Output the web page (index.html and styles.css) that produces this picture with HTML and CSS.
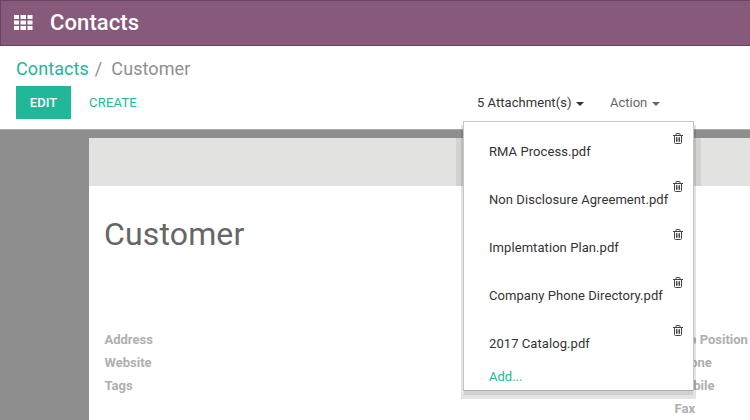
FILE: index.html
```html
<!DOCTYPE html>
<html lang="en">
<head>
<meta charset="utf-8">
<title>Contacts</title>
<link rel="stylesheet" href="styles.css">
</head>
<body>
<svg width="0" height="0" class="defs" aria-hidden="true">
  <symbol id="trash" viewBox="0 0 10 11">
    <path d="M0 2.5h10M3 2V.9Q3 .5 3.5 .5h3q.5 0 .5.4V2M1.5 2.5v7q0 1 1 1h5q1 0 1-1v-7M3.5 4.2v4.6M5 4.2v4.6M6.5 4.2v4.6" fill="none" stroke="currentColor"/>
  </symbol>
</svg>
<header class="navbar">
  <svg class="apps" viewBox="0 0 19 15" fill="#fff"><path d="M0 0h5v4H0zM6.500 0h5.500v4H6.500zM13.500 0h5v4h-5zM0 5.500h5v4H0zM6.500 5.500h5.500v4H6.500zM13.500 5.500h5v4h-5zM0 11h5v4H0zM6.500 11h5.500v4H6.500zM13.500 11h5v4h-5z"/></svg>
  <span class="brand">Contacts</span>
</header>
<section class="control">
  <nav class="crumbs"><a>Contacts</a><span class="slash">/</span><span>Customer</span></nav>
  <div class="actions">
    <button class="edit">EDIT</button>
    <button class="create">CREATE</button>
    <div class="dropdown">
      <span class="toggle">5 Attachment(s)</span><i class="caret"></i>
      <div class="menu">
        <div class="item"><span>RMA Process.pdf</span><svg class="trash"><use href="#trash"/></svg></div>
        <div class="item"><span>Non Disclosure Agreement.pdf</span><svg class="trash"><use href="#trash"/></svg></div>
        <div class="item"><span>Implemtation Plan.pdf</span><svg class="trash"><use href="#trash"/></svg></div>
        <div class="item"><span>Company Phone Directory.pdf</span><svg class="trash"><use href="#trash"/></svg></div>
        <div class="item"><span>2017 Catalog.pdf</span><svg class="trash"><use href="#trash"/></svg></div>
        <a class="add">Add...</a>
      </div>
    </div>
    <div class="more"><span class="action">Action</span><i class="caret"></i></div>
  </div>
</section>
<main class="content">
  <div class="sheet">
    <div class="statusbar"></div>
    <h1>Customer</h1>
    <div class="fields">
      <div class="col"><b>Address</b><b>Website</b><b>Tags</b></div>
      <div class="col"><b>Job Position</b><b>Phone</b><b>Mobile</b><b>Fax</b></div>
    </div>
  </div>
</main>
</body>
</html>
```
FILE: styles.css
```css
* { box-sizing: border-box; }
body { margin: 0; width: 750px; height: 420px; overflow: hidden; background: #fff; font: 13px/20px Roboto, sans-serif; color: #333; }
.defs { position: absolute; }
.navbar { height: 46px; display: flex; align-items: center; padding-left: 13px; background: #875a7b; border: 1px solid #68465f; border-right: 0; color: #fff; }
.apps { width: 19px; height: 15px; margin-top: -2px; }
.brand { margin-left: 17px; font-size: 22px; font-weight: 500; letter-spacing: .1px; }
.control { height: 83px; padding: 11px 0 0 16px; }
.crumbs { height: 24px; line-height: 24px; font-size: 18px; color: #8f8f8f; white-space: nowrap; letter-spacing: .08px; }
.crumbs a, .add { color: #21b799; }
.slash { margin: 0 9px 0 6px; }
.actions { display: flex; align-items: center; height: 33px; margin-top: 5px; }
button { height: 33px; border: 0; padding: 0; font: 500 13px/33px Roboto, sans-serif; }
.edit { width: 55px; color: #fff; background: #21b799; }
.create { width: 48px; margin-left: 18px; background: none; color: #21b799; font-weight: 400; white-space: nowrap; letter-spacing: .2px; }
.dropdown { position: relative; display: flex; align-items: center; width: 106px; margin-left: 340px; white-space: nowrap; }
.more { display: flex; align-items: center; margin-left: 27px; color: #666; }
.toggle { letter-spacing: .04px; }
.caret { border: 4px solid transparent; border-top-color: currentColor; border-bottom: 0; margin: 2px 0 0 4px; }
.menu { position: absolute; left: -14px; top: 28px; width: 231px; height: 270px; padding-top: 5px; background: #fff; border: 1px solid #c5c5c5; border-bottom-color: #aaa; box-shadow: 0 5px 0 -1px rgba(0,0,0,.08), 0 6px 0 2px rgba(0,0,0,.11); color: #333; z-index: 2; }
.item { height: 48px; display: flex; justify-content: space-between; padding: 15px 10px 0 25px; letter-spacing: .07px; }
.trash { width: 10px; height: 11px; flex: none; margin-top: -9px; color: #444; }
.item span { width: 181px; flex: none; }
.add { display: block; margin: 0 0 0 25px; }
.content { height: 291px; background: #8e8e8e; border-top: 1px solid #aaa; padding: 8px 0 0 89px; }
.sheet { height: 282px; background: #fff; }
.statusbar { height: 48px; background: linear-gradient(90deg, #e2e2e0 367px, #d2d2d0 367px, #d2d2d0 612px, #e2e2e0 612px); }
h1 { height: 48px; margin: 24px 0 0 15px; font-size: 32px; line-height: 48px; font-weight: 400; color: #666; letter-spacing: .15px; }
.fields { display: grid; grid-template-columns: 570px auto; margin: 70px 0 0 15.5px; color: #afafaf; font-size: 13px; line-height: 23px; }
.col { display: flex; flex-direction: column; white-space: nowrap; }
.col b { font-weight: 700; }
.caret { margin-left: 5px; }
```
